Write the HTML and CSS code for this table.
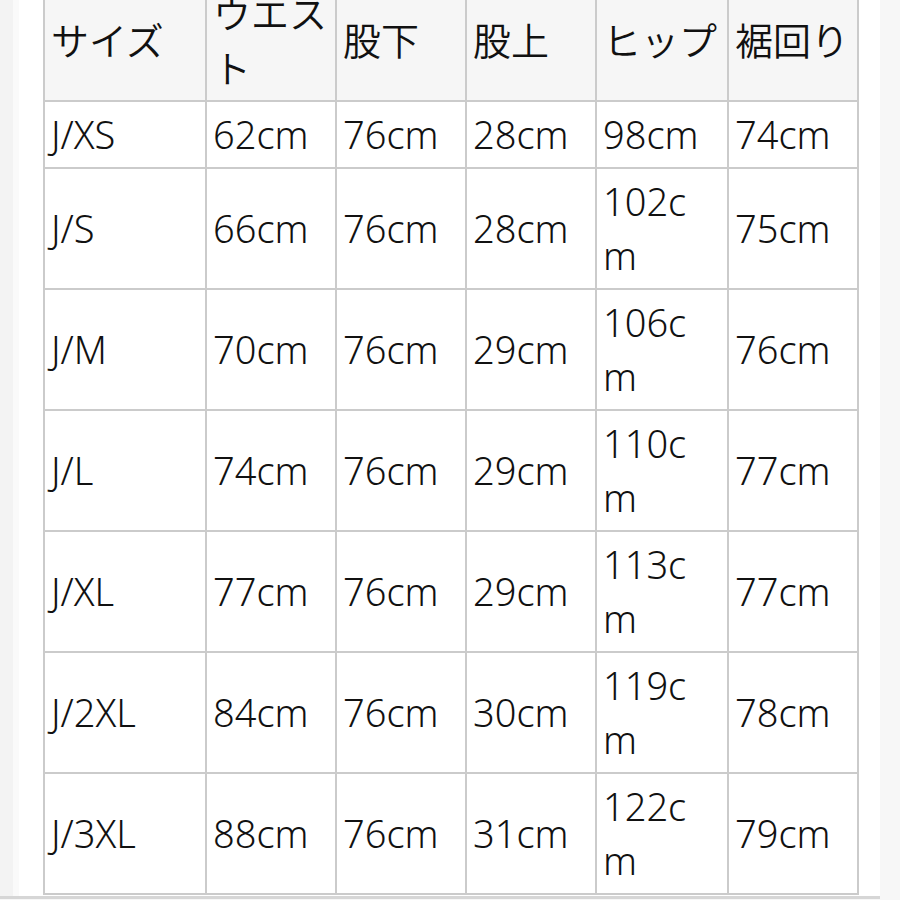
FILE: index.html
```html
<!DOCTYPE html>
<html lang="ja">
<head>
<meta charset="utf-8">
<title>サイズ表</title>
<link rel="stylesheet" href="styles.css">
</head>
<body>
<div class="page">
  <div class="sheet">
    <table class="sizes">
      <colgroup>
        <col class="c-size">
        <col class="c-n">
        <col class="c-n">
        <col class="c-n">
        <col class="c-hip">
        <col class="c-n">
      </colgroup>
      <thead>
        <tr><th>サイズ</th><th>ウエスト</th><th>股下</th><th>股上</th><th>ヒップ</th><th>裾回り</th></tr>
      </thead>
      <tbody>
        <tr><td>J/XS</td><td>62cm</td><td>76cm</td><td>28cm</td><td>98cm</td><td>74cm</td></tr>
        <tr><td>J/S</td><td>66cm</td><td>76cm</td><td>28cm</td><td>102cm</td><td>75cm</td></tr>
        <tr><td>J/M</td><td>70cm</td><td>76cm</td><td>29cm</td><td>106cm</td><td>76cm</td></tr>
        <tr><td>J/L</td><td>74cm</td><td>76cm</td><td>29cm</td><td>110cm</td><td>77cm</td></tr>
        <tr><td>J/XL</td><td>77cm</td><td>76cm</td><td>29cm</td><td>113cm</td><td>77cm</td></tr>
        <tr><td>J/2XL</td><td>84cm</td><td>76cm</td><td>30cm</td><td>119cm</td><td>78cm</td></tr>
        <tr><td>J/3XL</td><td>88cm</td><td>76cm</td><td>31cm</td><td>122cm</td><td>79cm</td></tr>
      </tbody>
    </table>
  </div>
</div>
</body>
</html>
```
FILE: styles.css
```css
html, body {
  margin: 0;
  padding: 0;
  background: #f7f7f7;
  height: 100%;
  overflow: hidden;
}
.page {
  background: linear-gradient(to right, #f3f3f3 0, #f3f3f3 13px, #fafafa 13px, #fafafa 19px, #ffffff 19px);
  width: 880px;
  margin-top: -21px;
  border-bottom: 3px solid #d6d6d6;
}
.sheet {
  padding: 0 0 1px 43px;
}
.sizes {
  border-collapse: collapse;
  table-layout: fixed;
  width: 815px;
  font-family: "Noto Sans", "Noto Sans CJK JP", sans-serif;
  font-size: 38px;
  line-height: 54.5px;
  font-weight: 350;
  color: #111111;
  word-break: break-all;
}
.c-size { width: 162px; }
.c-n { width: 130px; }
.c-hip { width: 132px; }
.sizes th,
.sizes td {
  border: 2px solid #cbcbcb;
  padding: 5px 7px 5px 6px;
  text-align: left;
  vertical-align: middle;
  font-weight: 350;
}
.sizes th {
  background: #f6f6f6;
}
.sizes td {
  background: #ffffff;
}
```
